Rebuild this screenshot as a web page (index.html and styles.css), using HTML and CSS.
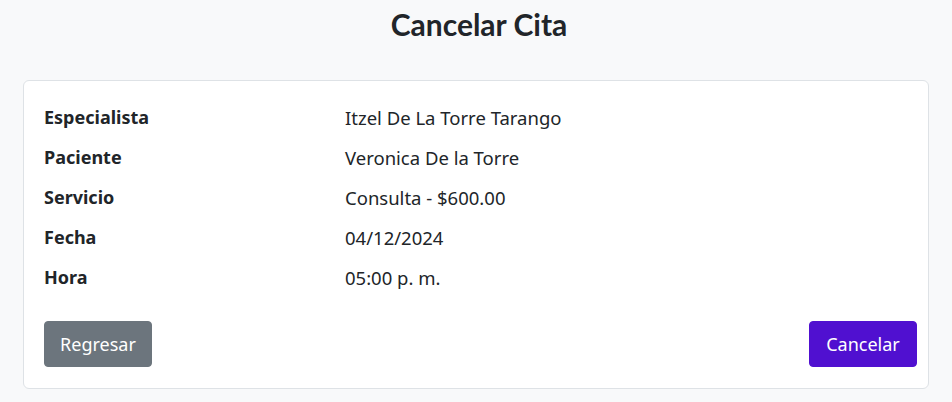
FILE: index.html
```html
<!DOCTYPE html>
<html lang="es">
<head>
<meta charset="utf-8">
<title>Cancelar Cita</title>
<link rel="stylesheet" href="styles.css">
</head>
<body>
<main class="page">
  <h2 class="title">Cancelar Cita</h2>
  <section class="card">
    <dl class="details">
      <dt>Especialista</dt><dd>Itzel De La Torre Tarango</dd>
      <dt>Paciente</dt><dd>Veronica De la Torre</dd>
      <dt>Servicio</dt><dd>Consulta - $600.00</dd>
      <dt>Fecha</dt><dd>04/12/2024</dd>
      <dt>Hora</dt><dd>05:00 p. m.</dd>
    </dl>
    <div class="actions">
      <button class="btn btn-secondary" type="button">Regresar</button>
      <button class="btn btn-primary" type="button">Cancelar</button>
    </div>
  </section>
</main>
</body>
</html>
```
FILE: styles.css
```css
* { box-sizing: border-box; }
html, body { margin: 0; padding: 0; }
body {
  background: #f8f9fa;
  color: #212529;
  font-family: "Noto Sans", Lato, sans-serif;
  font-size: 18px;
  line-height: 1.5;
}
.page {
  padding: 5px 23px 13px 23px;
}
.title {
  margin: 0 0 37px 0;
  padding-left: 6px;
  text-align: center;
  font-family: Lato, "Noto Sans", sans-serif;
  font-size: 30px;
  font-weight: 700;
  line-height: 38px;
}
.card {
  background: #fff;
  border: 1px solid #dee2e6;
  border-radius: 6px;
  padding: 23px 11px 21px 20px;
}
.details {
  display: grid;
  grid-template-columns: 301px 1fr;
  row-gap: 13px;
  margin: 0;
}
.details dt {
  font-weight: 700;
  line-height: 27px;
}
.details dd {
  margin: 0;
  font-size: 18.5px;
  line-height: 27px;
}
.actions {
  display: flex;
  justify-content: space-between;
  margin-top: 30px;
}
.btn {
  font-family: inherit;
  font-size: 18px;
  line-height: 28px;
  padding: 8px 0;
  border: 1px solid transparent;
  border-radius: 4px;
  color: #fff;
  height: 46px;
  width: 108px;
}
.btn-secondary { background: #6c757d; border-color: #6c757d; }
.btn-primary { background: #5010d0; border-color: #5010d0; }
```
